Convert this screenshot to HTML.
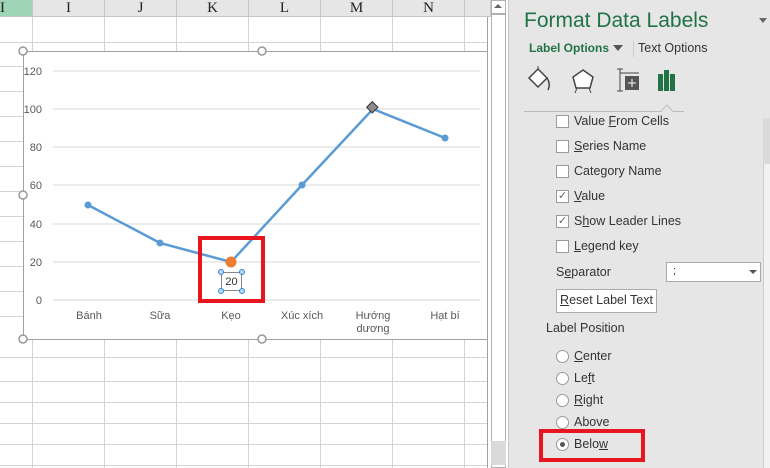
<!DOCTYPE html>
<html><head><meta charset="utf-8"><style>
*{margin:0;padding:0;box-sizing:border-box}
body{width:770px;height:468px;overflow:hidden;background:#fff;font-family:"Liberation Sans",sans-serif;position:relative}
.abs{position:absolute}
.hdr{position:absolute;top:0;height:17px;background:#e6e6e6;border-right:1px solid #c6c6c6;border-bottom:1px solid #c6c6c6;font-family:"Liberation Serif",serif;font-size:15px;text-align:center;line-height:17px;color:#222}
.panel{position:absolute;left:508px;top:0;width:262px;height:468px;background:#e6e6e6;border-left:1px solid #c8c8c8;font-size:12.5px;color:#333}
.cb{position:absolute;width:13px;height:13px;border:1px solid #9a9a9a;background:#fff}
.lbl{position:absolute;font-size:12.5px;color:#333}
.rb{position:absolute;width:13px;height:13px;border:1px solid #9a9a9a;border-radius:50%;background:#fff}
u{text-decoration:underline}
</style></head><body>
<svg class="abs" style="left:0;top:0" width="490" height="468">
<g stroke="#d4d4d4" stroke-width="1">
<line x1="32.5" y1="17" x2="32.5" y2="468"/><line x1="104.5" y1="17" x2="104.5" y2="468"/><line x1="176.5" y1="17" x2="176.5" y2="468"/><line x1="248.5" y1="17" x2="248.5" y2="468"/><line x1="320.5" y1="17" x2="320.5" y2="468"/><line x1="392.5" y1="17" x2="392.5" y2="468"/><line x1="464.5" y1="17" x2="464.5" y2="468"/>
<line x1="0" y1="42.5" x2="488" y2="42.5"/><line x1="0" y1="66.5" x2="488" y2="66.5"/><line x1="0" y1="91.5" x2="488" y2="91.5"/><line x1="0" y1="116.5" x2="488" y2="116.5"/><line x1="0" y1="141.5" x2="488" y2="141.5"/><line x1="0" y1="166.5" x2="488" y2="166.5"/><line x1="0" y1="191.5" x2="488" y2="191.5"/><line x1="0" y1="216.5" x2="488" y2="216.5"/><line x1="0" y1="241.5" x2="488" y2="241.5"/><line x1="0" y1="266.5" x2="488" y2="266.5"/><line x1="0" y1="291.5" x2="488" y2="291.5"/><line x1="0" y1="316.5" x2="488" y2="316.5"/>
<line x1="0" y1="357.5" x2="488" y2="357.5"/><line x1="0" y1="381.5" x2="488" y2="381.5"/><line x1="0" y1="402.5" x2="488" y2="402.5"/><line x1="0" y1="423.5" x2="488" y2="423.5"/><line x1="0" y1="444.5" x2="488" y2="444.5"/><line x1="0" y1="465.5" x2="488" y2="465.5"/>
</g>
<line x1="487.5" y1="17" x2="487.5" y2="468" stroke="#a0a0a0"/>
</svg>
<div class="hdr" style="left:0;width:33px;background:#9fd5b7;text-align:left">I</div>
<div class="hdr" style="left:33px;width:72px">I</div>
<div class="hdr" style="left:105px;width:72px">J</div>
<div class="hdr" style="left:177px;width:72px">K</div>
<div class="hdr" style="left:249px;width:72px">L</div>
<div class="hdr" style="left:321px;width:72px">M</div>
<div class="hdr" style="left:393px;width:72px">N</div>
<div class="hdr" style="left:465px;width:26px"></div>
<div class="abs" style="left:491px;top:0;width:15px;height:468px;background:#fff;border:1px solid #b0b0b0"></div>
<div class="abs" style="left:491px;top:13px;width:15px;height:2px;background:#b0b0b0"></div>
<div class="abs" style="left:494px;top:4px;width:0;height:0;border-left:4px solid transparent;border-right:4px solid transparent;border-bottom:4px solid #666"></div>
<div class="abs" style="left:491px;top:441px;width:15px;height:24px;background:#dadada"></div>
<svg class="abs" style="left:0;top:0" width="490" height="468" font-family="Liberation Sans, sans-serif">
<rect x="23.5" y="51.5" width="464" height="288" fill="#fff" stroke="#a0a0a0"/>
<g stroke="#d9d9d9"><line x1="53" y1="71" x2="480" y2="71"/><line x1="53" y1="109" x2="480" y2="109"/><line x1="53" y1="147" x2="480" y2="147"/><line x1="53" y1="185" x2="480" y2="185"/><line x1="53" y1="224" x2="480" y2="224"/><line x1="53" y1="262" x2="480" y2="262"/><line x1="53" y1="300" x2="480" y2="300"/></g>
<g font-size="11" fill="#595959" text-anchor="end"><text x="42" y="75">120</text><text x="42" y="113">100</text><text x="42" y="151">80</text><text x="42" y="189">60</text><text x="42" y="228">40</text><text x="42" y="266">20</text><text x="42" y="304">0</text></g>
<g font-size="11" fill="#595959" text-anchor="middle"><text x="89" y="319">Bánh</text><text x="160" y="319">Sữa</text><text x="231" y="319">Kẹo</text><text x="302" y="319">Xúc xích</text><text x="373" y="319">Hướng</text><text x="373" y="332">dương</text><text x="445" y="319">Hạt bí</text></g>
<polyline points="88,205 160,243 231,262 302,185 373,109 445,138" fill="none" stroke="#5b9bd5" stroke-width="2.5"/>
<g fill="#5b9bd5"><circle cx="88" cy="205" r="3.5"/><circle cx="160" cy="243" r="3.5"/><circle cx="302" cy="185" r="3.5"/><circle cx="445" cy="138" r="3.5"/></g>
<rect x="368" y="104" width="8" height="8" transform="rotate(45 373 108)" fill="#8c8c8c" stroke="#333"/>
<circle cx="231" cy="262" r="5.5" fill="#ed7d31"/>
<rect x="221.5" y="272.5" width="20" height="18" fill="#fff" stroke="#888"/>
<text x="231.5" y="285" font-size="11" fill="#333" text-anchor="middle">20</text>
<g fill="#bcd8f2" stroke="#2e86de"><circle cx="221" cy="272" r="2.5"/><circle cx="242" cy="272" r="2.5"/><circle cx="221" cy="291" r="2.5"/><circle cx="242" cy="291" r="2.5"/></g>
<rect x="200" y="238" width="63" height="63" fill="none" stroke="#e8141e" stroke-width="4"/>
<g fill="#fff" stroke="#999" stroke-width="1.5"><circle cx="23" cy="51" r="4"/><circle cx="262" cy="51" r="4"/><circle cx="23" cy="195" r="4"/><circle cx="23" cy="339" r="4"/><circle cx="262" cy="339" r="4"/></g>
</svg>
<div class="panel">
<div class="abs" style="left:15px;top:9px;font-size:21px;color:#217346">Format Data Labels</div>
<div class="abs" style="left:250px;top:18px;border-left:4px solid transparent;border-right:4px solid transparent;border-top:5px solid #666"></div>
<div class="abs" style="left:20px;top:41px;font-size:12px;font-weight:bold;color:#217346">Label Options</div>
<div class="abs" style="left:104px;top:45px;border-left:5px solid transparent;border-right:5px solid transparent;border-top:6px solid #555"></div>
<div class="abs" style="left:124px;top:41px;width:1px;height:16px;background:#ccc"></div>
<div class="abs" style="left:129px;top:41px;font-size:12.5px;color:#333">Text Options</div>
<svg class="abs" style="left:15px;top:66px" width="160" height="50">
<path d="M5,12 L14,3 L23,12 L14,21 Z" fill="#fff" stroke="#444" stroke-width="1.5"/><path d="M14,3 L14,0" stroke="#444"/><path d="M23,12 Q27,18 24,24" fill="none" stroke="#444" stroke-width="1.5"/>
<path d="M59,4 L69,11 L66,22 L52,22 L49,11 Z" fill="#fff" stroke="#444" stroke-width="1.5"/><path d="M53,22 L51,27 M65,22 L67,27" stroke="#444"/>
<path d="M96,3 L96,25 M93,3 L99,3 M93,25 L99,25 M96,7 L115,7" stroke="#444"/><rect x="101" y="10" width="14" height="14" fill="#555"/><path d="M104,17 L112,17 M108,13 L108,21" stroke="#fff"/>
<rect x="134" y="8" width="5" height="17" fill="#217346"/><rect x="140" y="4" width="5" height="21" fill="#217346"/><rect x="146" y="8" width="5" height="17" fill="#217346"/>
<path d="M0,45.5 L137,45.5 L143,39 L149,45.5 L262,45.5" fill="none" stroke="#bbb"/>
</svg>
<div class="abs" style="left:254px;top:118px;width:8px;height:350px;background:#f2f2f2;border-left:1px solid #ccc"></div>
<div class="abs" style="left:254px;top:118px;width:8px;height:46px;background:#dadada"></div>
<div class="cb" style="left:47px;top:115px"></div><div class="lbl" style="left:65px;top:114px">Value <u>F</u>rom Cells</div>
<div class="cb" style="left:47px;top:140px"></div><div class="lbl" style="left:65px;top:139px"><u>S</u>eries Name</div>
<div class="cb" style="left:47px;top:165px"></div><div class="lbl" style="left:65px;top:164px">Cate<u>g</u>ory Name</div>
<div class="cb" style="left:47px;top:190px;font-size:11px;line-height:11px;color:#666;text-align:center">✓</div><div class="lbl" style="left:65px;top:189px"><u>V</u>alue</div>
<div class="cb" style="left:47px;top:215px;font-size:11px;line-height:11px;color:#666;text-align:center">✓</div><div class="lbl" style="left:65px;top:214px">S<u>h</u>ow Leader Lines</div>
<div class="cb" style="left:47px;top:240px"></div><div class="lbl" style="left:65px;top:239px"><u>L</u>egend key</div>
<div class="lbl" style="left:47px;top:265px">S<u>e</u>parator</div>
<div class="abs" style="left:157px;top:262px;width:95px;height:20px;background:#fff;border:1px solid #aaa;font-size:11px;padding:2px 6px;color:#333">;</div>
<div class="abs" style="left:240px;top:270px;border-left:4px solid transparent;border-right:4px solid transparent;border-top:4px solid #555"></div>
<div class="abs" style="left:47px;top:289px;width:101px;height:24px;background:#fff;border:1px solid #aaa;font-size:12.5px;color:#333;text-align:center;line-height:21px"><u>R</u>eset Label Text</div>
<div class="lbl" style="left:37px;top:321px">Label Position</div>
<div class="rb" style="left:47px;top:350px"></div><div class="lbl" style="left:65px;top:349px"><u>C</u>enter</div>
<div class="rb" style="left:47px;top:372px"></div><div class="lbl" style="left:65px;top:371px">Le<u>f</u>t</div>
<div class="rb" style="left:47px;top:394px"></div><div class="lbl" style="left:65px;top:393px"><u>R</u>ight</div>
<div class="rb" style="left:47px;top:416px"></div><div class="lbl" style="left:65px;top:415px">Above</div>
<div class="rb" style="left:47px;top:438px"><div style="position:absolute;left:3px;top:3px;width:5px;height:5px;border-radius:50%;background:#555"></div></div><div class="lbl" style="left:65px;top:437px">Belo<u>w</u></div>
<div class="abs" style="left:30px;top:429px;width:106px;height:33px;border:4px solid #e8141e"></div>
</div>
</body></html>
